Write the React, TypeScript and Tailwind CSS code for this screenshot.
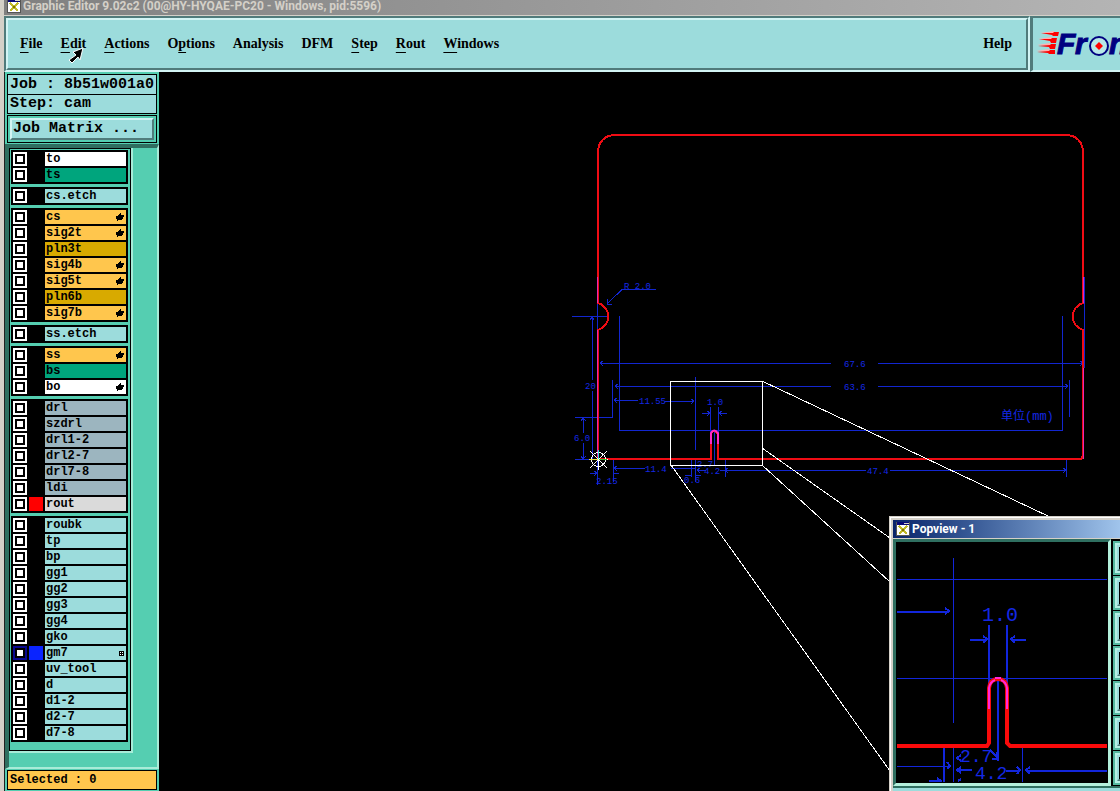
import { ReactNode } from 'react';

interface Layer {
  name: string;
  color: string;
  mark?: 'hand' | 'grid';
  swatch?: string;
  selected?: boolean;
}

const WHITE = 'bg-white';
const GREEN = 'bg-[#00a57d]';
const CYAN = 'bg-[#9cdcdc]';
const AMBER = 'bg-[#ffc64d]';
const OCHRE = 'bg-[#d8aa00]';
const SLATE = 'bg-[#9cb5bf]';

const layerGroups: Layer[][] = [
  [
    { name: 'to', color: WHITE },
    { name: 'ts', color: GREEN }
  ],
  [{ name: 'cs.etch', color: CYAN }],
  [
    { name: 'cs', color: AMBER, mark: 'hand' },
    { name: 'sig2t', color: AMBER, mark: 'hand' },
    { name: 'pln3t', color: OCHRE },
    { name: 'sig4b', color: AMBER, mark: 'hand' },
    { name: 'sig5t', color: AMBER, mark: 'hand' },
    { name: 'pln6b', color: OCHRE },
    { name: 'sig7b', color: AMBER, mark: 'hand' }
  ],
  [{ name: 'ss.etch', color: CYAN }],
  [
    { name: 'ss', color: AMBER, mark: 'hand' },
    { name: 'bs', color: GREEN },
    { name: 'bo', color: WHITE, mark: 'hand' }
  ],
  [
    { name: 'drl', color: SLATE },
    { name: 'szdrl', color: SLATE },
    { name: 'drl1-2', color: SLATE },
    { name: 'drl2-7', color: SLATE },
    { name: 'drl7-8', color: SLATE },
    { name: 'ldi', color: SLATE },
    { name: 'rout', color: 'bg-[#dadada]', swatch: 'bg-[#ff0000]' }
  ],
  [
    { name: 'roubk', color: CYAN },
    { name: 'tp', color: CYAN },
    { name: 'bp', color: CYAN },
    { name: 'gg1', color: CYAN },
    { name: 'gg2', color: CYAN },
    { name: 'gg3', color: CYAN },
    { name: 'gg4', color: CYAN },
    { name: 'gko', color: CYAN },
    { name: 'gm7', color: CYAN, mark: 'grid', swatch: 'bg-[#0a24ff]', selected: true },
    { name: 'uv_tool', color: CYAN },
    { name: 'd', color: CYAN },
    { name: 'd1-2', color: CYAN },
    { name: 'd2-7', color: CYAN },
    { name: 'd7-8', color: CYAN }
  ]
];

// [text before the mnemonic, mnemonic, text after it]
const menus: [string, string, string][] = [
  ['', 'F', 'ile'],
  ['', 'E', 'dit'],
  ['', 'A', 'ctions'],
  ['O', 'p', 'tions'],
  ['Analysis', '', ''],
  ['DFM', '', ''],
  ['', 'S', 'tep'],
  ['', 'R', 'out'],
  ['', 'W', 'indows']
];

function WindowIcon() {
  return (
    <svg viewBox="0 0 14 14" className="h-[14px] w-[14px] shrink-0" shapeRendering="crispEdges" aria-hidden="true">
      <rect width="14" height="14" fill="#fff" />
      <rect width="14" height="3" fill="#0a0a78" />
      <rect x="8" y="1" width="5" height="1" fill="#d4d0c8" />
      <path d="M0 0V14M0 13.5H14M13.5 0V14" stroke="#555" fill="none" />
      <path d="M3 4L11 12M11 4L3 12" stroke="#c0b828" strokeWidth="2" fill="none" />
      <path d="M6 8H8" stroke="#807800" strokeWidth="2" fill="none" />
    </svg>
  );
}

function MarkIcon({ kind }: { kind: 'hand' | 'grid' }) {
  if (kind === 'grid') {
    return (
      <svg viewBox="0 0 5 5" className="h-[5px] w-[5px]" shapeRendering="crispEdges" aria-hidden="true">
        <path d="M0 0H5V5H0Z" fill="#000" />
        <path d="M1 1H2V2H1ZM3 1H4V2H3ZM1 3H2V4H1ZM3 3H4V4H3Z" fill="#fff" />
      </svg>
    );
  }
  return (
    <svg viewBox="0 0 8 8" className="h-2 w-2" shapeRendering="crispEdges" aria-hidden="true">
      <path d="M4 0H5V2H8V4H7V6H6V7H2V8H1V6H0V3H2V2H3V1H4Z" fill="#000" />
    </svg>
  );
}

function LayerRow({ layer }: { layer: Layer }) {
  return (
    <div className="flex h-[14px] gap-0.5">
      <label className={`flex size-[14px] items-center justify-center ${layer.selected ? 'bg-[#0a0a90]' : 'bg-white'}`}>
        <input
          type="checkbox"
          aria-label={layer.name}
          defaultChecked={layer.selected}
          className="size-[10px] appearance-none border-2 border-black bg-white"
        />
      </label>
      <span className={`size-[14px] ${layer.swatch ?? 'bg-black'}`} />
      <button
        className={`flex flex-1 items-center justify-between pr-0.5 pl-px text-left text-[12px] leading-[14px] font-bold ${layer.color}`}
      >
        <span>{layer.name}</span>
        {layer.mark && <MarkIcon kind={layer.mark} />}
      </button>
    </div>
  );
}

function Logo() {
  return (
    <svg viewBox="1033 18 87 52" className="h-[52px] w-[87px] shrink-0" role="img" aria-label="Frontline">
      <g fill="#ffb0b0">
        <path d="M1040 33L1054 31V34Z" />
        <path d="M1038 39L1052 37V40Z" />
        <path d="M1037 45L1050 43V46Z" />
        <path d="M1036 51L1049 49V52Z" />
      </g>
      <g fill="#ff0000">
        <path d="M1041 33L1053 33L1054 32H1059L1058 36H1053L1052 35Z" />
        <path d="M1039 39L1051 39L1052 38H1057L1056 43H1051L1050 41Z" />
        <path d="M1038 46L1050 45L1051 44H1056L1055 49H1050L1049 47Z" />
        <path d="M1037 52L1049 51L1050 50H1055V54H1049L1048 53Z" />
      </g>
      <g
        fill="#000080"
        stroke="#000080"
        fontSize="30"
        fontWeight="bold"
        fontStyle="italic"
        fontFamily="Liberation Sans, sans-serif"
      >
        <text x="1057" y="54">F</text>
        <text x="1075" y="54">r</text>
        <text x="1109" y="54">n</text>
      </g>
      <circle cx="1099" cy="46" r="9" fill="#b8e8e8" stroke="#000080" strokeWidth="2" />
      <path d="M1099 42L1103 46L1099 50L1095 46Z" fill="#ff0000" />
    </svg>
  );
}

function MenuBar() {
  return (
    <header className="flex h-14 bg-[#9cdcdc] font-['Liberation_Serif',serif] text-[14px] font-bold">
      <div className="flex flex-1 border-2 border-t-[#507b7b] border-r-[#d2f4f4] border-b-[#d2f4f4] border-l-[#507b7b]">
        <nav className="flex flex-1 items-center gap-[18px] border-2 border-t-[#d2f4f4] border-r-[#507b7b] border-b-[#507b7b] border-l-[#d2f4f4] pr-3.5 pb-0.5 pl-3">
          {menus.map(([before, key, after]) => (
            <button key={before + key + after}>
              {before}
              {key && <span className="underline decoration-1 underline-offset-4">{key}</span>}
              {after}
            </button>
          ))}
          <button className="ml-auto">Help</button>
        </nav>
      </div>
      <div className="flex w-[90px] items-center overflow-hidden border-y-2 border-l-[3px] border-t-[#507b7b] border-b-[#d2f4f4] border-l-[#507b7b]">
        <Logo />
      </div>
    </header>
  );
}

function Sidebar() {
  return (
    <aside className="flex w-[154px] shrink-0 flex-col bg-[#55ceb1] font-['Liberation_Mono',monospace] font-bold">
      <div className="px-0.5 pt-0.5 text-[15px]">
        <div className="border border-black bg-[#9cdcdc] pt-px pl-0.5 leading-[18px] whitespace-pre">Job : 8b51w001a0</div>
        <div className="border border-t-0 border-black bg-[#9cdcdc] pl-0.5 leading-[18px] whitespace-pre">Step: cam</div>
        <div className="mt-px border border-black p-0.5">
          <button className="block w-full border-2 border-t-[#d2f4f4] border-r-[#507b7b] border-b-[#507b7b] border-l-[#d2f4f4] bg-[#9cdcdc] pl-px text-left leading-[18px]">
            Job Matrix ...
          </button>
        </div>
      </div>

      {/* Layer list */}
      <div className="mt-px flex flex-1 border-t-4 border-r-2 border-b-2 border-l-4 border-t-[#2f6f60] border-r-[#a8ecd8] border-b-[#a8ecd8] border-l-[#2f6f60]">
        <div className="mb-3.5 w-[124px] border-r-2 border-b-2 border-[#a8ecd8]">
          <div className="flex h-full flex-col gap-[3px] border border-black pt-px pr-0.5 pb-2 pl-px">
            {layerGroups.map((group) => (
              <div key={group[0].name} className="flex flex-col gap-0.5 bg-black p-0.5">
                {group.map((layer) => (
                  <LayerRow key={layer.name} layer={layer} />
                ))}
              </div>
            ))}
          </div>
        </div>
      </div>

      <div className="mx-0.5 my-px border border-black bg-[#ffc64d] pl-0.5 text-[12px] leading-[18px]">Selected : 0</div>
    </aside>
  );
}

function DimText({ x, y, size = 9, children }: { x: number; y: number; size?: number; children: ReactNode }) {
  return (
    <text x={x} y={y} fontSize={size} fill="#1428e6" fontFamily="Liberation Mono, Noto Sans CJK SC, monospace">
      {children}
    </text>
  );
}

function BoardDrawing() {
  return (
    <svg
      viewBox="159 72 961 719"
      className="absolute top-0 left-0 h-[719px] w-[961px]"
      role="img"
      aria-label="Board outline"
    >
      {/* Dimension lines */}
      <g stroke="#1226d0" fill="none" shapeRendering="crispEdges">
        <path d="M597.5 277V485M1084.500 277V368M572 316.500H609M592.500 317V380M592.500 391V459M619.500 316V430.500H1062.500V316" />
        <path d="M600 363.500H831M878 363.500H1083M615 386.500H831M878 386.500H1068M612.500 380V417.500H575M1069.500 380V417" />
        <path d="M583.500 418V433M583.500 443V459M575 459.500H598M614 400.500H638M665 401.500H694M695.500 377V450" />
        <path d="M710.500 407V434M718.500 407V434M714.500 431V465M702 413.500H710M719 413.500H727" />
        <path d="M590 473.500H597M613.500 460V482M613 468.500H645M671 468.500H695M691.500 460V477M695.500 460V482M725.500 460V477M697 470.500H706M720 470.500H866M890 470.500H1066M1066.500 460V477" />
        <path d="M656 289.500H622L607 304M607 299V304H612M594 320L592 317L590 320M603 361L600 363L603 366M1080 361L1083 363L1080 366M618 384L615 386L618 389M1065 384L1068 386L1065 389" />
        <path d="M617 398L614 400L617 403M691 399L694 401L691 404M707 411L710 413L707 416M722 411L719 413L722 416M581 421L583 418L586 421M581 456L583 459L586 456" />
        <path d="M617 466L614 468L617 471M594 471L597 473L594 476M613 473.500H619M728 468L725 470L728 473M1063 468L1066 470L1063 473M685 475.500H691M696 475.500H701M700 468L697 470L700 473" />
      </g>

      {/* Board outline */}
      <path
        d="M711 459H598V330A14 14 0 0 0 598 303V150Q600 137 613 135H1068Q1081 137 1083 150V303A14 14 0 0 0 1083 330V456L1081 459H718V434Q714 428 711 434Z"
        fill="none"
        stroke="#f00c14"
        strokeWidth="2"
        shapeRendering="crispEdges"
      />
      <path d="M597.5 277V303M597.5 330V457M1083.500 277V303M1083.500 368V459" stroke="#e628b4" fill="none" />
      <path d="M711 444V433Q714 428 718 433V444" stroke="#ff28c8" strokeWidth="2" fill="none" />

      <DimText x={624} y={289}>R 2.0</DimText>
      <DimText x={585} y={389}>20</DimText>
      <DimText x={574} y={441}>6.0</DimText>
      <DimText x={639} y={404}>11.55</DimText>
      <DimText x={707} y={405}>1.0</DimText>
      <DimText x={596} y={484}>2.15</DimText>
      <DimText x={645} y={472}>11.4</DimText>
      <DimText x={684} y={483}>0.6</DimText>
      <DimText x={697} y={467}>2.7</DimText>
      <DimText x={704} y={474}>4.2</DimText>
      <DimText x={844} y={367}>67.6</DimText>
      <DimText x={844} y={390}>63.6</DimText>
      <DimText x={867} y={474}>47.4</DimText>
      <DimText x={1001} y={420} size={12}>单位(mm)</DimText>

      {/* Zoom frame and its projection to the popview */}
      <g stroke="#fff" fill="none" shapeRendering="crispEdges">
        <path d="M670.500 381.500H762.500V465.500H670.500Z" />
        <path d="M762 381L1050 517M762 448L890 538M762 465L890 582M671 465L890 771" />
      </g>

      {/* Datum point */}
      <g fill="none" stroke="#fff" shapeRendering="crispEdges">
        <circle cx="598.500" cy="459.500" r="7" />
        <path d="M598.500 450V470M589 459.500H608M590 451L607 468M607 451L590 468" />
        <path d="M598.500 450V459" stroke="#30d8e0" />
        <path d="M589 459.500H598" stroke="#e8e040" />
        <path d="M599 459.500H607" stroke="#30c030" />
      </g>
    </svg>
  );
}

function PopviewDrawing() {
  return (
    <svg viewBox="896 542 212 241" className="h-[241px] w-[212px]" role="img" aria-label="Slot detail">
      <g stroke="#1226dc" fill="none" shapeRendering="crispEdges">
        <path d="M897 579.500H1107M897 678.500H1107M953.500 558V723M953.500 748V782M897 766.500H950M1022.500 748V782" />
        <path
          d="M897 612H949M989 625V684M1007 625V684M970 640H987M1011 640H1026M998 680V761M944 748V782M1026 771H1107M1006 771H1020M957 770H972"
          strokeWidth="2"
        />
        <path
          d="M945 608L949 611L945 614M983 636L987 639L983 643M1015 636L1011 639L1015 643M947 762L950 766L947 769M961 767L957 770L961 773M1017 767L1020 770L1017 774M1030 767L1026 770L1030 774M929 781H942M937 778L941 781M961 755L957 758L961 761M958 781L961 779M990 750L997 757M997 752V759H992"
          strokeWidth="2"
        />
      </g>
      <g fill="none" stroke="#fa0a0a" strokeWidth="4">
        <path d="M897 746H987L989 743V688Q990 679 998 679Q1006 679 1007 688V743L1010 746H1107" />
      </g>
      <path d="M989 709V688Q990 682 995 680M1001 680Q1006 682 1007 688V709M995 678H1001" fill="none" stroke="#ff28dc" strokeWidth="2" />
      <DimText x={982} y={621} size={20}>1.0</DimText>
      <DimText x={960} y={762} size={18}>2.7</DimText>
      <DimText x={975} y={779} size={18}>4.2</DimText>
    </svg>
  );
}

function Popview() {
  return (
    <section className="absolute top-[444px] left-[730px] w-[280px] border-t border-l border-[#d4d0c8] bg-[#d4d0c8] font-['Roboto',sans-serif]">
      <div className="border-t border-l border-white pt-0.5 pl-0.5">
        <h2 className="flex h-[18px] items-center gap-0.5 bg-linear-to-r from-[#0a246a] to-[#a6caf0] to-85% pl-[3px] text-[12px] font-bold text-white">
          <WindowIcon />
          Popview - 1
        </h2>
        <div className="mt-px flex gap-0.5 bg-black">
          <div className="border-3 border-t-[#2f6f60] border-r-[#b4f0dc] border-b-[#b4f0dc] border-l-[#2f6f60]">
            <PopviewDrawing />
          </div>
          <div className="flex flex-1 flex-col gap-px pt-0.5">
            {['Zoom in', 'Zoom out', 'Pan left', 'Pan right', 'Pan up', 'Pan down', 'Home'].map((name) => (
              <button
                key={name}
                aria-label={name}
                className="h-[34px] border-2 border-[#55b8a0] bg-[#b4f0e4] p-0.5"
              >
                <span className="block h-full border-2 border-t-[#9cdcdc] border-r-[#507b7b] border-b-[#507b7b] border-l-[#9cdcdc] bg-black" />
              </button>
            ))}
          </div>
        </div>
        <div className="h-5 border-t-2 border-[#2f6f60] bg-[#9cdcdc]" />
      </div>
    </section>
  );
}

function Cursor() {
  return (
    <svg viewBox="0 0 18 18" className="absolute top-[46px] left-[62px] h-[18px] w-[18px]" aria-hidden="true">
      <path d="M17 2L7 6L10 9L3 14L6 17L12 11L14 14Z" fill="#000" stroke="#fff" />
    </svg>
  );
}

export default function App() {
  return (
    <div className="relative flex min-h-screen flex-col overflow-hidden border-l-4 border-[#d4d0c8] bg-black text-black">
      <div className="flex h-4 items-center gap-0.5 border-b border-[#d4d0c8] bg-linear-to-r from-[#808080] to-[#b4b4b4] pb-[3px] pl-[3px] font-['Roboto',sans-serif] text-[12px] leading-3 font-bold whitespace-nowrap text-[#d4d0c8]">
        <WindowIcon />
        <h1>Graphic Editor 9.02c2 (00@HY-HYQAE-PC20 - Windows, pid:5596)</h1>
      </div>
      <MenuBar />
      <div className="flex flex-1 border-l border-[#222]">
        <Sidebar />
        <main className="relative flex-1 overflow-hidden bg-black">
          <BoardDrawing />
          <Popview />
        </main>
      </div>
      <Cursor />
    </div>
  );
}
